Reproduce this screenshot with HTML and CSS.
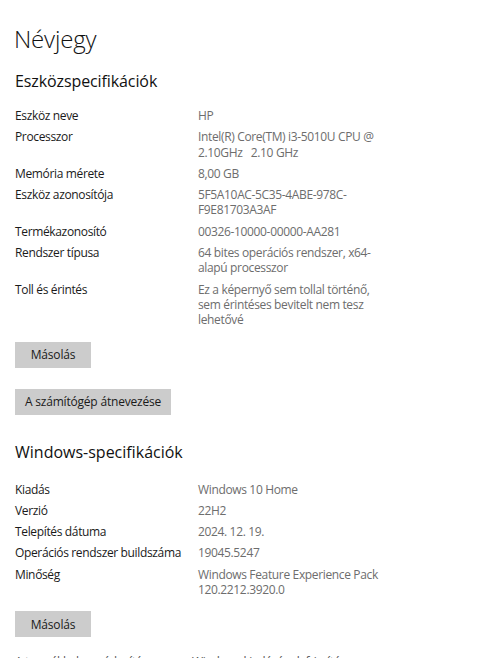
FILE: index.html
```html
<!DOCTYPE html>
<html lang="hu">
<head>
<meta charset="utf-8">
<link rel="stylesheet" href="styles.css">
</head>
<body>
<main class="page">
  <h1 class="title">Névjegy</h1>
  <h2 class="section">Eszközspecifikációk</h2>
  <dl class="specs">
    <div class="row"><dt>Eszköz neve</dt><dd>HP</dd></div>
    <div class="row"><dt>Processzor</dt><dd>Intel(R) Core(TM) i3-5010U CPU @<br>2.10GHz&nbsp;&nbsp;&nbsp;2.10 GHz</dd></div>
    <div class="row"><dt>Memória mérete</dt><dd>8,00 GB</dd></div>
    <div class="row"><dt>Eszköz azonosítója</dt><dd>5F5A10AC-5C35-4ABE-978C-<br>F9E81703A3AF</dd></div>
    <div class="row"><dt>Termékazonosító</dt><dd>00326-10000-00000-AA281</dd></div>
    <div class="row"><dt>Rendszer típusa</dt><dd>64 bites operációs rendszer, x64-<br>alapú processzor</dd></div>
    <div class="row"><dt>Toll és érintés</dt><dd>Ez a képernyő sem tollal történő,<br>sem érintéses bevitelt nem tesz<br>lehetővé</dd></div>
  </dl>
  <button class="btn btn-first">Másolás</button>
  <button class="btn btn-second">A számítógép átnevezése</button>
  <h2 class="section section-win">Windows-specifikációk</h2>
  <dl class="specs specs-win">
    <div class="row"><dt>Kiadás</dt><dd>Windows 10 Home</dd></div>
    <div class="row"><dt>Verzió</dt><dd>22H2</dd></div>
    <div class="row"><dt>Telepítés dátuma</dt><dd>2024. 12. 19.</dd></div>
    <div class="row"><dt>Operációs rendszer buildszáma</dt><dd>19045.5247</dd></div>
    <div class="row"><dt>Minőség</dt><dd>Windows Feature Experience Pack<br>120.2212.3920.0</dd></div>
  </dl>
  <button class="btn btn-first">Másolás</button>
  <p class="link">A termékkulcs módosítása vagy a Windows kiadásának frissítése</p>
</main>
</body>
</html>
```
FILE: styles.css
```css
html, body {
  margin: 0;
  padding: 0;
  background: #ffffff;
}
body {
  font-family: "Open Sans", "Noto Sans", sans-serif;
  color: #1a1a1a;
  width: 500px;
  height: 658px;
  overflow: hidden;
}
.page {
  padding: 22px 0 0 15px;
}
.title {
  margin: 0 0 0 -1px;
  font-size: 24px;
  font-weight: 300;
  line-height: 34px;
  letter-spacing: -0.2px;
  color: #111;
}
.section {
  margin: 13px 0 0 0;
  font-size: 16px;
  font-weight: 400;
  line-height: 24px;
  letter-spacing: -0.1px;
  color: #111;
}
.specs {
  margin: 15px 0 0 0;
  display: flex;
  flex-direction: column;
  gap: 6px;
  font-size: 12px;
  line-height: 15.3px;
  letter-spacing: -0.35px;
}
.specs-win {
  margin-top: 18px;
}
.row {
  display: grid;
  grid-template-columns: 183px 1fr;
}
dt {
  color: #1a1a1a;
}
dd {
  margin: 0;
  color: #6d6d6d;
}
.btn {
  display: block;
  border: 0;
  background: #cccccc;
  color: #1a1a1a;
  font-family: inherit;
  font-size: 12px;
  letter-spacing: -0.2px;
  height: 26px;
  padding: 0;
}
.btn-first {
  margin-top: 14px;
  width: 76px;
}
.btn-second {
  margin-top: 21px;
  width: 156px;
}
.section-win {
  margin-top: 25px;
  letter-spacing: 0;
}
.link {
  margin: 17px 0 0 0;
  font-size: 12px;
  line-height: 15.5px;
  letter-spacing: -0.35px;
  color: #555;
  white-space: nowrap;
}
```
